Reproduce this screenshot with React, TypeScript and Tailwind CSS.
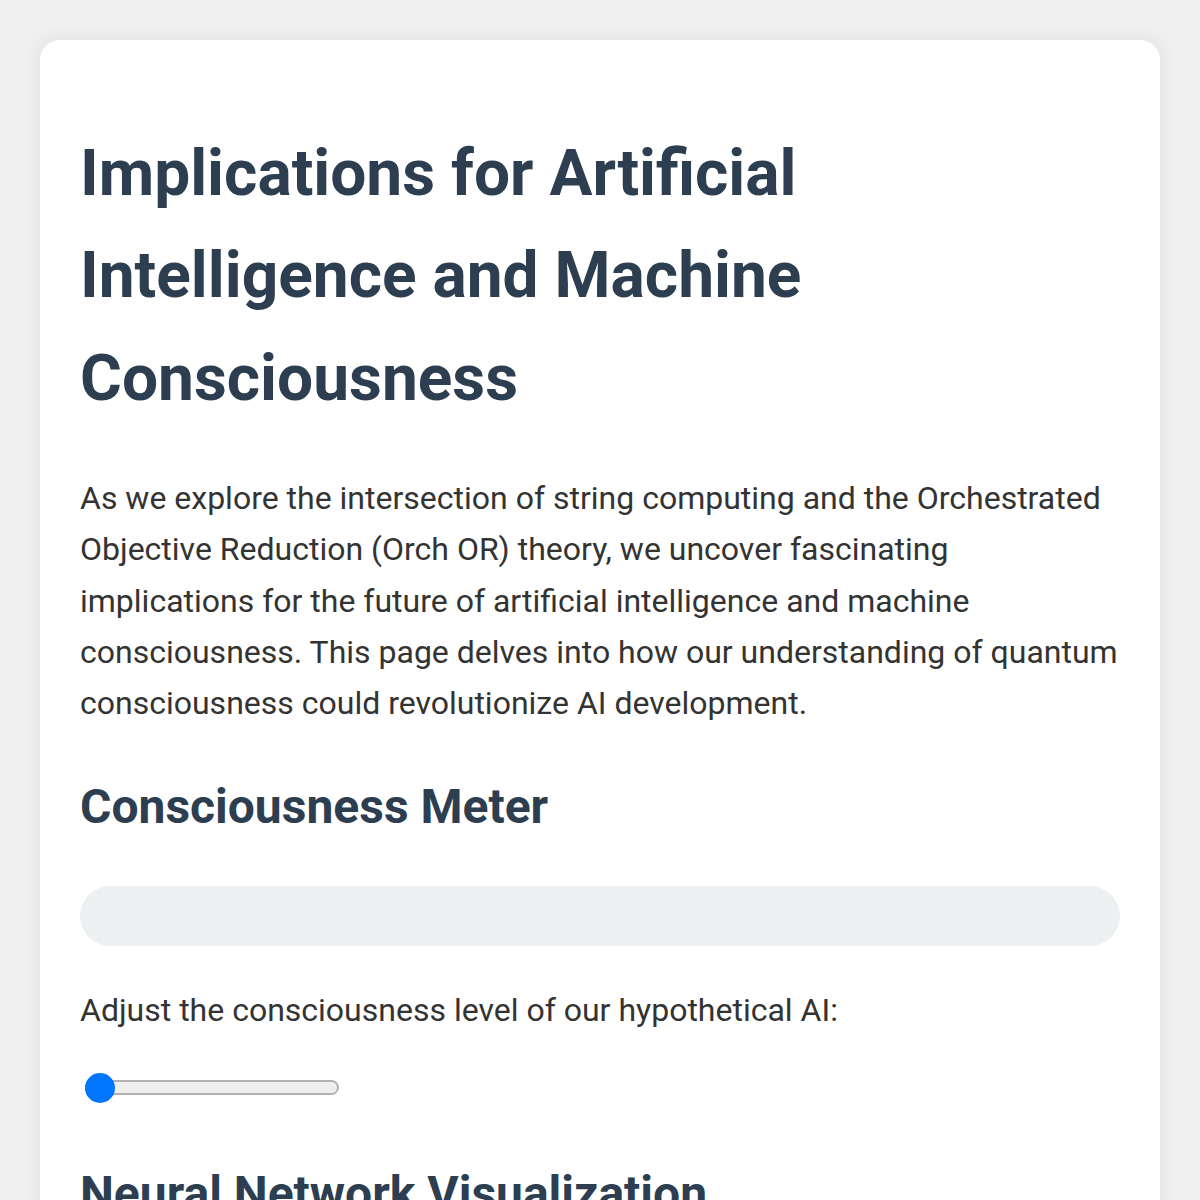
import { useState } from 'react'

// Hypothetical AI consciousness page: intro text, meter and a level slider
function LevelSlider({ value, onChange }: { value: number; onChange: (v: number) => void }) {
  const pct = value / 100
  return (
    <div className="relative h-[30px] w-[254px]"
      onClick={(e) => {
        const r = e.currentTarget.getBoundingClientRect()
        onChange(Math.round(Math.min(1, Math.max(0, (e.clientX - r.left) / r.width)) * 100))
      }}>
      <div className="absolute left-0 right-0 top-[7px] h-[15px] rounded-full border-2 border-[#b2b2b2] bg-[#efefef]" />
      <div className="absolute top-0 h-[30px] w-[30px] rounded-full bg-[#0075ff]"
        style={{ left: `${pct * (254 - 30)}px` }} />
    </div>
  )
}

export default function App() {
  const [level, setLevel] = useState(0)

  return (
    <div className="min-h-screen bg-[#f0f0f0] px-10 pt-10 pb-10 font-['Roboto',sans-serif]">
      <div className="rounded-[20px] bg-white px-10 pt-10 pb-10 shadow-[0_0_20px_rgba(0,0,0,0.08)]">
        <h1 className="mt-[43px] text-[64px] font-bold leading-[102.4px] text-[#2c3e50]">
          Implications for Artificial Intelligence and Machine Consciousness
        </h1>
        <p className="mt-[43px] text-[32px] leading-[51.2px] text-[#333]">
          As we explore the intersection of string computing and the Orchestrated Objective Reduction (Orch OR) theory, we uncover fascinating implications for the future of artificial intelligence and machine consciousness. This page delves into how our understanding of quantum consciousness could revolutionize AI development.
        </p>

        <h2 className="mt-[40px] text-[48px] font-bold leading-[76.8px] text-[#2c3e50]">
          Consciousness Meter
        </h2>
        <div className="mt-[40px] h-[60px] overflow-hidden rounded-full bg-[#ecf0f1]">
          <div className="h-full bg-[#3498db]" style={{ width: `${level}%` }} />
        </div>
        <p className="mt-[39px] text-[32px] leading-[51.2px] text-[#333]">
          Adjust the consciousness level of our hypothetical AI:
        </p>
        <div className="mt-[32px] h-[48px] pt-[5px] pl-[5px]">
          <LevelSlider value={level} onChange={setLevel} />
        </div>

        <h2 className="mt-[40px] text-[48px] font-bold leading-[76.8px] text-[#2c3e50]">
          Neural Network Visualization
        </h2>
        <div className="mt-[40px] h-[400px] rounded-[10px] bg-[#ecf0f1]" />
      </div>
    </div>
  )
}
